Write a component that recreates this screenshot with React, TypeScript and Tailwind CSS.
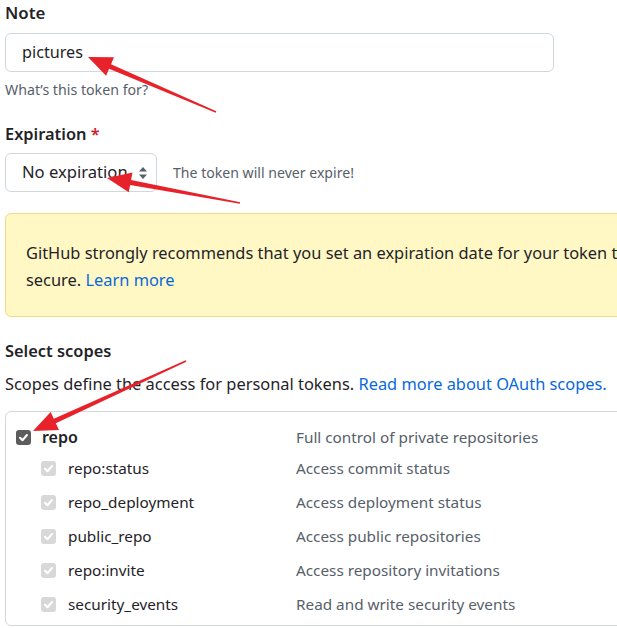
function arrowPoints(x1: number, y1: number, x2: number, y2: number) {
  const dx = x2 - x1
  const dy = y2 - y1
  const len = Math.hypot(dx, dy)
  const ux = dx / len
  const uy = dy / len
  const nx = -uy
  const ny = ux
  const headLen = 24
  const headHalf = 10
  const w0 = 1.5
  const w1 = 5
  const bx = x2 - ux * headLen
  const by = y2 - uy * headLen
  const pts = [
    [x1 + (nx * w0) / 2, y1 + (ny * w0) / 2],
    [bx + (nx * w1) / 2, by + (ny * w1) / 2],
    [bx + nx * headHalf, by + ny * headHalf],
    [x2, y2],
    [bx - nx * headHalf, by - ny * headHalf],
    [bx - (nx * w1) / 2, by - (ny * w1) / 2],
    [x1 - (nx * w0) / 2, y1 - (ny * w0) / 2],
  ]
  return pts.map((p) => p.join(',')).join(' ')
}

const scopes = [
  { name: 'repo:status', desc: 'Access commit status' },
  { name: 'repo_deployment', desc: 'Access deployment status' },
  { name: 'public_repo', desc: 'Access public repositories' },
  { name: 'repo:invite', desc: 'Access repository invitations' },
  { name: 'security_events', desc: 'Read and write security events' },
]

function Check({ disabled }: { disabled?: boolean }) {
  return (
    <span
      className={`flex h-[15px] w-[15px] shrink-0 items-center justify-center rounded-[3px] ${
        disabled ? 'bg-[#d8d8d8]' : 'bg-[#5c5c5c]'
      }`}
    >
      <svg width="11" height="11" viewBox="0 0 12 12">
        <path d="M2.2 6.3 L4.9 9 L9.8 3.3" fill="none" stroke="white" strokeWidth="2.2" strokeLinecap="round" strokeLinejoin="round" />
      </svg>
    </span>
  )
}

export default function App() {
  return (
    <div className="relative h-[628px] w-[617px] overflow-hidden bg-white font-['Noto_Sans',sans-serif] text-[#1f2328]">
      <div className="w-[1000px] pl-[5px]">
        <div className="text-[16.8px] font-semibold leading-[26px]">Note</div>
        <div className="mt-[7px] flex h-[39px] w-[549px] items-center rounded-md border border-[#d0d7de] px-4 text-[16.2px]">
          pictures
        </div>
        <div className="mt-2 text-[14.2px] leading-5 text-[#57606a]">What’s this token for?</div>

        <div className="mt-[21px] text-[16.4px] font-semibold leading-[26px]">
          Expiration <span className="text-[#cf222e]">*</span>
        </div>
        <div className="mt-[6px] flex items-center">
          <div className="flex h-[39px] w-[152px] items-center justify-between rounded-md border border-[#d0d7de] pl-4 pr-[8px] text-[16.6px]">
            <span>No expiration</span>
            <svg width="10" height="14" viewBox="0 0 10 14" className="text-[#57606a]">
              <path d="M5 1 L9 5.5 H1 Z M5 13 L1 8.5 H9 Z" fill="currentColor" />
            </svg>
          </div>
          <div className="ml-4 text-[14.1px] text-[#57606a]">The token will never expire!</div>
        </div>

        <div className="mt-[21px] h-[104px] whitespace-nowrap rounded-md border border-[#efd98b] bg-[#fff8c5] pl-5 pt-[25px] text-[16.4px] leading-[27px]">
          GitHub strongly recommends that you set an expiration date for your token to help keep your information
          <br />
          secure. <span className="text-[#0969da]">Learn more</span>
        </div>

        <div className="mt-[21px] text-[16.4px] font-semibold leading-[26px]">Select scopes</div>
        <div className="mt-[7px] text-[16.4px] leading-[26px]">
          Scopes define the access for personal tokens.{' '}
          <span className="text-[#0969da]">Read more about OAuth scopes.</span>
        </div>

        <div className="mt-[14px] rounded-md border border-[#d0d7de] pb-[4px] pt-[12px] text-[15.3px]">
          <div className="flex h-[26px] items-center">
            <div className="flex w-[290px] items-center gap-[11px] pl-[10px]">
              <Check />
              <span className="text-[16px] font-semibold">repo</span>
            </div>
            <span className="text-[#57606a]">Full control of private repositories</span>
          </div>
          <div className="mt-[1px]">
            {scopes.map((s) => (
              <div key={s.name} className="flex h-[34px] items-center">
                <div className="flex w-[290px] items-center gap-[12px] pl-[35px]">
                  <Check disabled />
                  <span>{s.name}</span>
                </div>
                <span className="text-[#57606a]">{s.desc}</span>
              </div>
            ))}
          </div>
        </div>
      </div>

      <svg className="pointer-events-none absolute inset-0" width="617" height="628">
        <polygon points={arrowPoints(216, 112, 88, 57)} fill="#e8222a" />
        <polygon points={arrowPoints(240, 203, 107, 178)} fill="#e8222a" />
        <polygon points={arrowPoints(186, 361, 33, 431)} fill="#e8222a" />
      </svg>
    </div>
  )
}
